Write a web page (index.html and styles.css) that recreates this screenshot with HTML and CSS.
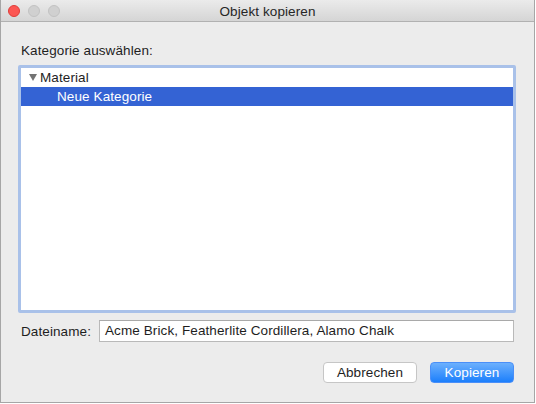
FILE: index.html
```html
<!DOCTYPE html>
<html lang="de">
<head>
<meta charset="utf-8">
<link rel="stylesheet" href="styles.css">
</head>
<body>
<div class="window">
  <div class="titlebar">
    <div class="lights">
      <span class="light red"></span>
      <span class="light gray"></span>
      <span class="light gray"></span>
    </div>
    <div class="title">Objekt kopieren</div>
  </div>
  <div class="content">
    <div class="label-top">Kategorie auswählen:</div>
    <div class="listbox">
      <div class="list">
        <div class="row"><span class="tri"></span>Material</div>
        <div class="row selected child">Neue Kategorie</div>
      </div>
    </div>
    <div class="namerow">
      <span class="namelabel">Dateiname:</span>
      <div class="input">Acme Brick, Featherlite Cordillera, Alamo Chalk</div>
    </div>
    <div class="buttons">
      <button class="btn">Abbrechen</button>
      <button class="btn primary">Kopieren</button>
    </div>
  </div>
</div>
</body>
</html>
```
FILE: styles.css
```css
* { box-sizing: border-box; }
html, body { margin: 0; padding: 0; background: #ffffff; }
body {
  width: 536px;
  height: 404px;
  font-family: "Liberation Sans", Arial, sans-serif;
  font-size: 13.5px;
  letter-spacing: 0.1px;
  color: #1e1e1e;
}
.window {
  width: 535px;
  height: 403px;
  background: #ececec;
  border: 1px solid #a6a6a6;
  border-top: none;
  display: flex;
  flex-direction: column;
}
.titlebar {
  height: 22px;
  flex: none;
  background: linear-gradient(#ebebeb, #d5d5d5);
  border-bottom: 1px solid #b1b1b1;
  position: relative;
  display: flex;
  align-items: center;
  justify-content: center;
}
.lights {
  position: absolute;
  left: 7px;
  top: 5px;
  display: flex;
  gap: 8px;
}
.light {
  width: 12px;
  height: 12px;
  border-radius: 50%;
}
.light.red { background: #fc5753; border: 1px solid #df3d39; }
.light.gray { background: #d0d0d0; border: 1px solid #c2c2c2; }
.title {
  color: #262626;
  padding-top: 1px;
}
.content {
  flex: 1;
  display: flex;
  flex-direction: column;
  padding: 0 18px 0 17px;
}
.label-top {
  margin-top: 21px;
  margin-left: 3px;
  height: 16px;
  line-height: 16px;
}
.listbox {
  margin-top: 6px;
  height: 248px;
  border: 3px solid #a9c1e9;
  border-radius: 2px;
  background: #ffffff;
}
.list {
  height: 100%;
  background: #ffffff;
}
.row {
  height: 19px;
  line-height: 19px;
  display: flex;
  align-items: center;
  padding-left: 8px;
}
.tri {
  width: 0;
  height: 0;
  border-left: 4px solid transparent;
  border-right: 4px solid transparent;
  border-top: 7px solid #737373;
  margin-right: 3px;
}
.row.selected {
  background: #3463d4;
  color: #ffffff;
}
.row.child { padding-left: 36px; }
.namerow {
  margin-top: 7px;
  display: flex;
  align-items: center;
  padding-left: 3px;
  margin-right: 2px;
}
.namelabel { width: 78px; flex: none; }
.input {
  flex: 1;
  height: 22px;
  line-height: 20px;
  background: #ffffff;
  border: 1px solid #b9b9b9;
  border-top-color: #a9a9a9;
  padding-left: 5px;
}
.buttons {
  margin-top: 20px;
  display: flex;
  justify-content: flex-end;
  gap: 13px;
  margin-right: 2px;
}
.btn {
  height: 21px;
  font-family: "Liberation Sans", Arial, sans-serif;
  font-size: 13.5px;
  letter-spacing: 0.1px;
  border-radius: 4px;
  border: 1px solid #c6c6c6;
  background: #ffffff;
  color: #1e1e1e;
  padding: 0;
  width: 94px;
}
.btn.primary {
  width: 84px;
  border: 1px solid #4a8ff8;
  background: linear-gradient(#6cb0fd, #1c7ffc);
  color: #ffffff;
}
```
